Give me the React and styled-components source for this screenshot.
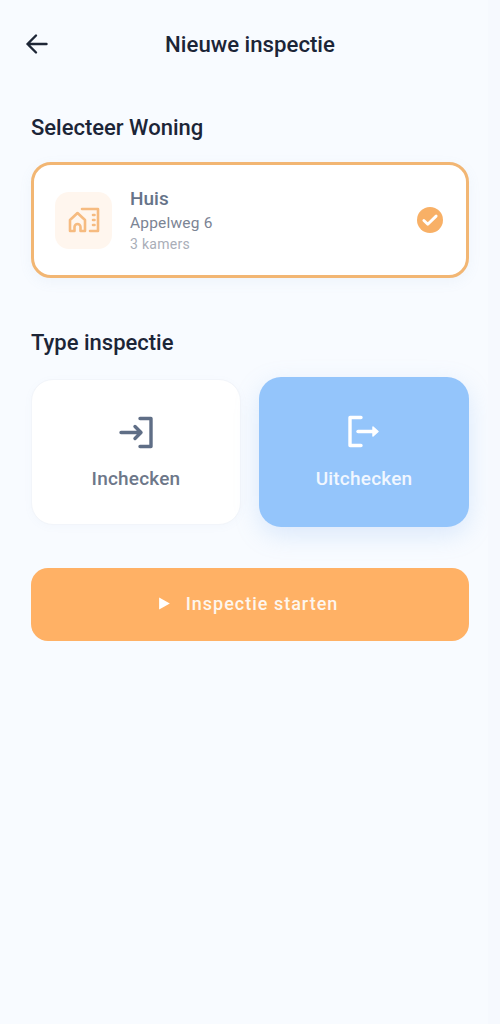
import React from "react";
import styled, { createGlobalStyle } from "styled-components";

const Global = createGlobalStyle`
  html, body { margin: 0; padding: 0; background: #f8fbff; }
  body { font-family: Roboto, "Liberation Sans", sans-serif; }
  * { box-sizing: border-box; }
`;

const Screen = styled.div`
  width: 500px;
  height: 1024px;
  background: #f8fbff;
  padding: 0 31px;
  display: flex;
  flex-direction: column;
  overflow: hidden;
`;

const Header = styled.header`
  height: 44px;
  margin-top: 22px;
  display: flex;
  align-items: center;
  justify-content: center;
  position: relative;
`;

const BackButton = styled.button`
  position: absolute;
  left: -6px;
  top: 10px;
  width: 24px;
  height: 24px;
  padding: 0;
  border: 0;
  background: none;
  color: #1e2636;
  display: flex;
`;

const Title = styled.h1`
  margin: 0;
  font-size: 22.2px;
  line-height: 44px;
  font-weight: 500;
  color: #1c2537;
`;

const SectionTitle = styled.h2`
  margin: ${(p) => p.$top}px 0 ${(p) => p.$bottom}px;
  font-size: 22px;
  line-height: 30px;
  font-weight: 500;
  color: #1c2537;
`;

const HomeCard = styled.div`
  height: 116px;
  background: #fff;
  border: 3px solid #f2b673;
  border-radius: 20px;
  padding: 0 23px 0 21px;
  display: flex;
  align-items: center;
  box-shadow: 0 4px 14px rgba(120, 150, 200, 0.07);
`;

const IconTile = styled.div`
  width: 57px;
  height: 57px;
  border-radius: 14px;
  background: #fff6ee;
  display: flex;
  align-items: center;
  justify-content: center;
  color: #f6bb80;
`;

const HomeInfo = styled.div`
  margin-left: 18px;
  padding-top: 1px;
  flex: 1;
  display: flex;
  flex-direction: column;
`;

const HomeName = styled.div`
  font-size: 19px;
  line-height: 24px;
  font-weight: 500;
  color: #667389;
`;

const HomeAddress = styled.div`
  margin-top: 1px;
  font-size: 15.5px;
  line-height: 22px;
  color: #7b8494;
  letter-spacing: 0.2px;
`;

const HomeRooms = styled.div`
  font-size: 14px;
  line-height: 20px;
  color: #a9aeb8;
  letter-spacing: 0.3px;
`;

const CheckBadge = styled.div`
  width: 26px;
  height: 26px;
  border-radius: 50%;
  background: #f8b066;
  display: flex;
  align-items: center;
  justify-content: center;
`;

const TypeGrid = styled.div`
  display: grid;
  grid-template-columns: 210px 210px;
  gap: 18px;
`;

const TypeCard = styled.div`
  height: ${(p) => (p.$active ? 150 : 146)}px;
  margin-top: ${(p) => (p.$active ? -1 : 1)}px;
  border-radius: 22px;
  background: ${(p) => (p.$active ? "#94c5fb" : "#ffffff")};
  border: ${(p) => (p.$active ? "0" : "1px solid #f2f5fa")};
  color: ${(p) => (p.$active ? "#f1f7ff" : "#6d7789")};
  box-shadow: ${(p) =>
    p.$active ? "0 8px 24px rgba(130, 180, 240, 0.25)" : "0 2px 8px rgba(120, 150, 200, 0.04)"};
  display: flex;
  flex-direction: column;
  align-items: center;
  padding-top: ${(p) => (p.$active ? 38 : 35)}px;
`;

const TypeLabel = styled.div`
  margin-top: 18px;
  font-size: 19px;
  line-height: 24px;
  font-weight: 500;
  letter-spacing: 0.2px;
`;

const StartButton = styled.button`
  margin-top: 41px;
  height: 73px;
  width: 100%;
  border: 0;
  border-radius: 17px;
  background: #ffb165;
  color: #fdf6ee;
  font-family: inherit;
  font-size: 18px;
  font-weight: 500;
  letter-spacing: 1px;
  display: flex;
  align-items: center;
  justify-content: center;
  gap: 15px;
  padding: 0 4px 2px 0;
`;

const RightEdge = styled.div`
  position: fixed;
  top: 0;
  right: 0;
  width: 12px;
  height: 100%;
  background: #f6f9fe;
`;

export default function App() {
  return (
    <Screen>
      <Global />
      <RightEdge />
      <Header>
        <BackButton aria-label="Terug">
          <svg width="24" height="24" viewBox="0 0 24 24" fill="none" stroke="currentColor" strokeWidth="2.4" strokeLinecap="round" strokeLinejoin="round">
            <path d="M21.5 12H2.5M11 3.5L2.5 12l8.5 8.5" />
          </svg>
        </BackButton>
        <Title>Nieuwe inspectie</Title>
      </Header>

      <SectionTitle $top={47} $bottom={19}>Selecteer Woning</SectionTitle>
      <HomeCard>
        <IconTile>
          <svg width="32" height="26" viewBox="0 0 32 26" fill="none" stroke="currentColor" strokeWidth="2.6" strokeLinejoin="round" strokeLinecap="round">
            <path d="M14 2h16v22h-8" />
            <path d="M25 8h1.5M25 13h1.5M25 18h1.5" />
            <path d="M2 13L9.5 6l7.5 7v11h-4.5v-4a3 3 0 0 0-6 0v4H2z" fill="#fff6ee" />
          </svg>
        </IconTile>
        <HomeInfo>
          <HomeName>Huis</HomeName>
          <HomeAddress>Appelweg 6</HomeAddress>
          <HomeRooms>3 kamers</HomeRooms>
        </HomeInfo>
        <CheckBadge>
          <svg width="20" height="20" viewBox="0 0 18 18" fill="none" stroke="#fff" strokeWidth="2.6" strokeLinecap="round" strokeLinejoin="round">
            <path d="M3.5 9.5l3.5 3.3 7.5-7.3" />
          </svg>
        </CheckBadge>
      </HomeCard>

      <SectionTitle $top={50} $bottom={20}>Type inspectie</SectionTitle>
      <TypeGrid>
        <TypeCard>
          <svg width="36" height="34" viewBox="0 0 36 34" fill="none" stroke="#5f6e86" strokeWidth="3.4" strokeLinecap="round" strokeLinejoin="round">
            <path d="M22 3.5h11v28H22" />
            <path d="M3 17.5h20M17 11.5l6 6-6 6" />
          </svg>
          <TypeLabel>Inchecken</TypeLabel>
        </TypeCard>
        <TypeCard $active>
          <svg width="36" height="34" viewBox="0 0 36 34" fill="none" stroke="#ffffff" strokeWidth="3.4" strokeLinecap="round" strokeLinejoin="round">
            <path d="M15 2.5H4v28h11" />
            <path d="M12 16.5h17" />
            <path d="M27 12l5 4.5-5 4.5z" fill="#fff" strokeWidth="1.5" />
          </svg>
          <TypeLabel>Uitchecken</TypeLabel>
        </TypeCard>
      </TypeGrid>

      <StartButton>
        <svg width="13" height="15" viewBox="0 0 12 14" fill="#fff">
          <path d="M1 1.5v11L11 7z" />
        </svg>
        Inspectie starten
      </StartButton>
    </Screen>
  );
}
